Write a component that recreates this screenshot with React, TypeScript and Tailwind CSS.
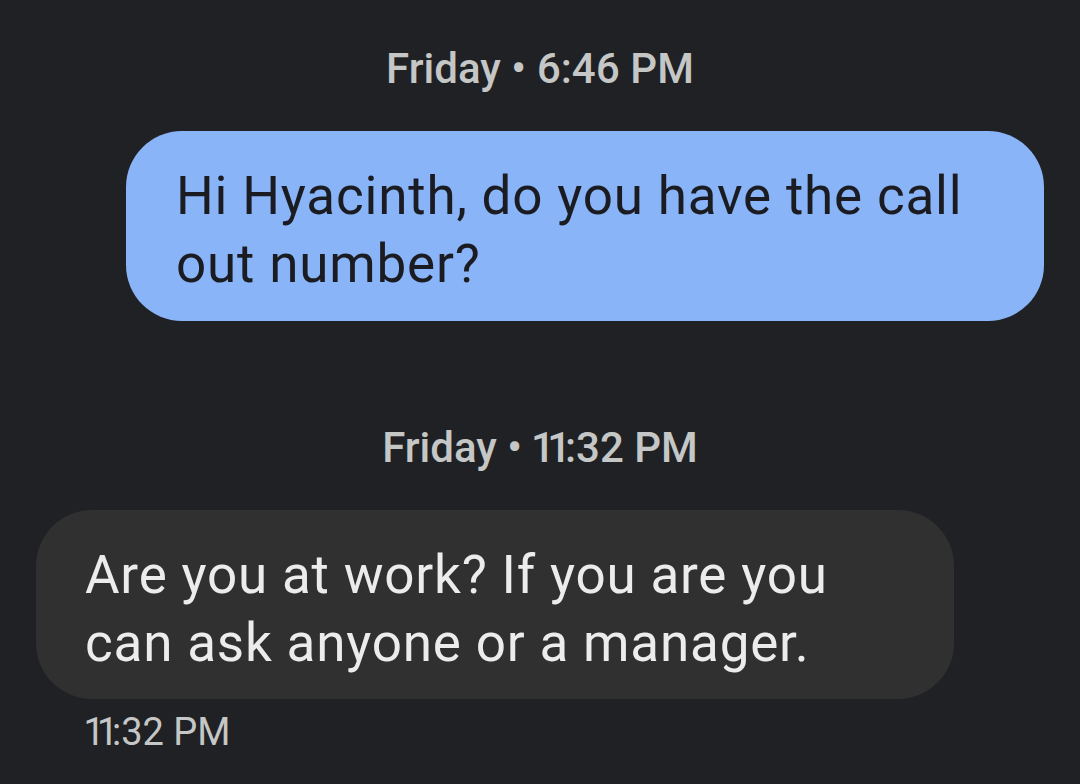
export default function App() {
  return (
    <div
      className="w-[1080px] h-[784px] bg-[#202124] overflow-hidden flex flex-col proportional-nums"
      style={{ fontFamily: 'Roboto, "Noto Sans", sans-serif' }}
    >
      <div className="pt-[41px] h-[97px] text-center text-[42px] leading-[56px] font-medium text-[#c4c7c5]">
        Friday • 6:46 PM
      </div>
      <div className="mt-[34px] flex justify-end pr-[36px]">
        <div className="w-[918px] h-[190px] rounded-[56px] bg-[#8ab4f8] pl-[50px] pt-[31px] text-[53px] leading-[68px] tracking-[0.8px] text-[#1b1c22]">
          <div>Hi Hyacinth, do you have the call</div>
          <div>out number?</div>
        </div>
      </div>
      <div className="mt-[99px] h-[56px] text-center text-[42px] leading-[56px] font-medium text-[#c4c7c5]">
        Friday • <span className="tracking-[-3px]">11</span>:32 PM
      </div>
      <div className="mt-[34px] flex justify-start pl-[36px]">
        <div className="w-[918px] h-[189px] rounded-[56px] bg-[#303030] pl-[49px] pt-[31px] text-[53px] leading-[68px] tracking-[0.8px] text-[#ececec]">
          <div>Are you at work? If you are you</div>
          <div>can ask anyone or a manager.</div>
        </div>
      </div>
      <div className="mt-[9px] pl-[85px] text-[38px] leading-[48px] text-[#c4c7c5]">
        <span className="tracking-[-3px]">11</span>:32 PM
      </div>
    </div>
  );
}
